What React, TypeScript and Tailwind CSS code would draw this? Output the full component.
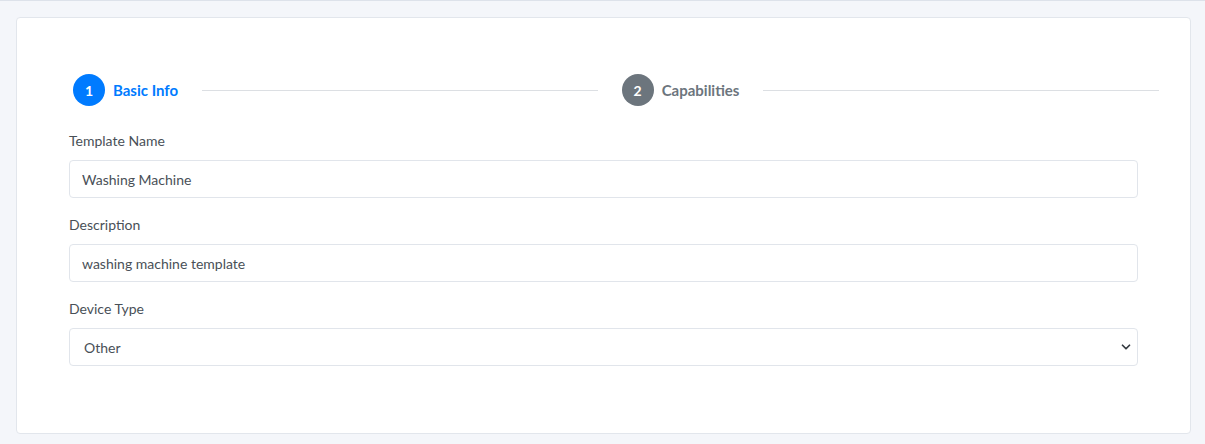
import { Fragment } from 'react'
import { ChevronDown } from 'lucide-react'

type Step = { n: number; label: string; active?: boolean }

const steps: Step[] = [
  { n: 1, label: 'Basic Info', active: true },
  { n: 2, label: 'Capabilities' },
]

function StepItem({ step }: { step: Step }) {
  return (
    <div className="flex items-center gap-2 shrink-0">
      <span
        className={
          step.active
            ? 'w-8 h-8 rounded-full bg-[#007bff] text-white text-[14px] font-bold flex items-center justify-center'
            : 'w-8 h-8 rounded-full bg-[#6c757d] text-white text-[14px] font-bold flex items-center justify-center'
        }
      >
        {step.n}
      </span>
      <span
        className={
          step.active
            ? 'text-[15px] font-bold text-[#007bff]'
            : 'text-[15px] font-bold text-[#6c757d]'
        }
      >
        {step.label}
      </span>
    </div>
  )
}

function Field({ label, value }: { label: string; value: string }) {
  return (
    <div className="mb-[17px]">
      <label className="block text-[14px] leading-[20px] text-[#495057] mb-[9px]">{label}</label>
      <input
        readOnly
        value={value}
        className="w-full h-[38px] px-3 rounded border border-[#e1e5eb] bg-white text-[14px] text-[#495057] outline-none"
      />
    </div>
  )
}

export default function App() {
  return (
    <div
      className="min-h-[444px] bg-[#f4f6fa] border-t border-[#dde2ea] pt-4 pl-4 pr-[14px]"
      style={{ fontFamily: 'Lato, "Source Sans Pro", "Noto Sans", sans-serif' }}
    >
      <div className="bg-white border border-[#e2e6ec] rounded pt-[56px] pb-[67px] px-[52px]">
        <div className="flex items-center gap-6 ml-1 mr-[-21px] mb-[25px]">
          {steps.map((s) => (
            <Fragment key={s.n}>
              <StepItem step={s} />
              <div className="h-px flex-1 bg-[#dcdfe3]" />
            </Fragment>
          ))}
        </div>

        <Field label="Template Name" value="Washing Machine" />
        <Field label="Description" value="washing machine template" />

        <div>
          <label className="block text-[14px] leading-[20px] text-[#495057] mb-[9px]">Device Type</label>
          <div className="relative">
            <select
              defaultValue="Other"
              className="w-full h-[38px] pl-[14px] pr-8 rounded border border-[#e1e5eb] bg-white text-[14px] text-[#495057] appearance-none outline-none"
            >
              <option>Other</option>
              <option>Washing Machine</option>
            </select>
            <ChevronDown
              size={14}
              strokeWidth={3}
              className="absolute right-[5px] top-[12px] text-[#343a40] pointer-events-none"
            />
          </div>
        </div>
      </div>
    </div>
  )
}
